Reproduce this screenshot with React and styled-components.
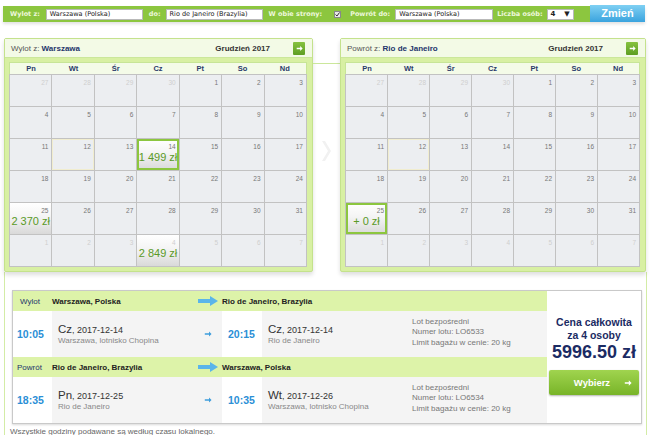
import React from 'react';
import styled, { createGlobalStyle } from 'styled-components';

const GlobalStyle = createGlobalStyle`
  html, body { margin: 0; padding: 0; background: #fff; }
  body {
    font-family: "Liberation Sans", Arial, sans-serif;
    width: 650px;
    height: 435px;
    overflow: hidden;
  }
`;

const Page = styled.div`
  padding-top: 6px;
`;

/* ---------- search bar ---------- */

const SearchBar = styled.div`
  display: flex;
  align-items: center;
  height: 16px;
  margin: 0 5px 0 3px;
  padding-left: 7px;
  background: #8cc63f;
  box-shadow: 0 2px 3px rgba(0, 0, 0, 0.12);
  font-family: "DejaVu Sans", Verdana, sans-serif;
  font-size: 6.5px;
  color: #eef8dc;
`;

const BarLabel = styled.span`
  margin-left: ${p => p.$ml || 0}px;
  font-weight: bold;
  white-space: nowrap;
`;

const BarInput = styled.div`
  box-sizing: border-box;
  width: ${p => p.$w}px;
  height: 11px;
  margin-left: ${p => p.$ml || 5}px;
  padding: 0 3px;
  background: #fff;
  border: 1px solid #b9b9b9;
  color: #222;
  font-size: 6.5px;
  line-height: 9px;
  white-space: nowrap;
`;

const Check = styled.span`
  box-sizing: border-box;
  width: 7px;
  height: 7px;
  margin-left: 12px;
  background: #e9e9e9;
  border: 1px solid #888;
  display: flex;
  align-items: center;
  justify-content: center;
`;

const SelectBox = styled(BarInput)`
  display: flex;
  justify-content: space-between;
  font-size: 7px;
  font-weight: bold;
`;

const ChangeButton = styled.div`
  margin-left: auto;
  width: 55px;
  height: 17px;
  margin-top: -1px;
  background: linear-gradient(#7fd0f3, #3aa3de);
  color: #fff;
  font-family: "Liberation Sans", Arial, sans-serif;
  font-weight: bold;
  font-size: 11px;
  line-height: 17px;
  text-align: center;
`;

/* ---------- calendars ---------- */

const CalendarRow = styled.div`
  display: flex;
  margin: 16px 0 0 4px;
`;

const Frame = styled.div`
  box-sizing: border-box;
  width: ${p => p.$w}px;
  background: #d8f0a3;
  border: 1px solid #c4e28c;
  border-radius: 2px;
  box-shadow: 0 3px 4px rgba(0, 0, 0, 0.13);
`;

const FrameHeader = styled.div`
  display: flex;
  align-items: center;
  height: 18px;
  padding: 0 7px 0 6px;
  background: #f3fae6;
  border-bottom: 1px solid #cbe79b;
  font-size: 8px;
  color: #555;
`;

const Place = styled.b`
  color: #24356b;
`;

const Month = styled.b`
  margin-left: auto;
  margin-right: 23px;
  color: #333;
`;

const NextBtn = styled.span`
  width: 12px;
  height: 13px;
  background: linear-gradient(#86c23f, #5e9e22);
  border-radius: 1px;
  display: flex;
  align-items: center;
  justify-content: center;
`;

const FrameBody = styled.div`
  padding: 4px 5px 4px 4px;
`;

const DayNames = styled.div`
  display: grid;
  grid-template-columns: repeat(7, 1fr);
  height: 11px;
  background: #f4fbe8;
  border: 1px solid #c7e597;
  border-bottom: none;
  font-size: 7.5px;
  font-weight: bold;
  color: #2a3a6a;
  line-height: 11px;
  text-align: center;
`;

const Grid = styled.div`
  display: grid;
  grid-template-columns: repeat(7, 1fr);
  grid-auto-rows: 31px;
  gap: 1px;
  background: #c2c2c2;
  border: 1px solid #c2c2c2;
`;

const Cell = styled.div`
  position: relative;
  display: flex;
  flex-direction: column;
  align-items: center;
  background: ${p => (p.$price ? 'linear-gradient(#ffffff 0%, #f4f4f4 45%, #d9d9d9 100%)' : '#eceef1')};
  box-shadow: ${p =>
    p.$selected ? 'inset 0 0 0 2px #8cc63f' : p.$today ? 'inset 0 0 0 1px #f1edcf' : 'none'};
`;

const DayNum = styled.span`
  align-self: flex-end;
  padding: 4px 3px 0 0;
  font-size: 6.5px;
  color: ${p => (p.$muted ? '#cfcfcf' : '#777')};
`;

const Price = styled.span`
  margin-top: 1px;
  font-size: 11px;
  color: #5a9a27;
  white-space: nowrap;
`;

const Gap = styled.div`
  width: 27px;
  display: flex;
  flex-direction: column;
  align-items: center;
`;

const Connector = styled.div`
  align-self: stretch;
  height: 1px;
  margin-top: 25px;
  background: #cbe79b;
`;

const Chevron = styled.svg`
  margin-top: 77px;
`;

/* ---------- results ---------- */

const Results = styled.div`
  margin: 0 3px 0 4px;
  padding: 18px 4px 0 7px;
  border-left: 1px solid #d3eca6;
  border-right: 1px solid #d3eca6;
`;

const Box = styled.div`
  display: flex;
  border: 1px solid #c9c9c9;
  box-shadow: 0 1px 2px rgba(0, 0, 0, 0.15);
`;

const Table = styled.div`
  width: 534px;
`;

const HeadRow = styled.div`
  display: grid;
  grid-template-columns: 39px 146px 24px 1fr;
  align-items: center;
  height: 20px;
  background: #ddf3a9;
  font-size: 8px;
  font-weight: bold;
  color: #222;
`;

const Dir = styled.span`
  padding-left: ${p => p.$pl}px;
  font-weight: normal;
  color: #24356b;
`;

const FlightRow = styled.div`
  display: grid;
  grid-template-columns: 39px 170px 40px 1fr;
  height: 46px;
`;

const Time = styled.div`
  display: flex;
  align-items: center;
  padding-left: ${p => p.$pl}px;
  background: #fff;
  font-size: 10.5px;
  font-weight: bold;
  color: #2b8fd6;
`;

const Info = styled.div`
  display: flex;
  align-items: center;
  padding-left: 6px;
  background: #f4f4f4;
`;

const Stop = styled.div`
  width: ${p => p.$w || 'auto'};
  display: flex;
  flex-direction: column;
`;

const DateLine = styled.span`
  font-size: 9px;
  color: #333;
  white-space: nowrap;
  b {
    font-weight: normal;
    font-size: 11.5px;
  }
`;

const Sub = styled.span`
  margin-top: 1px;
  font-size: 8px;
  color: #888;
  white-space: nowrap;
`;

const SmallArrow = styled.svg`
  margin-left: auto;
  margin-right: 10px;
`;

const Details = styled.div`
  display: flex;
  flex-direction: column;
  margin-top: -3px;
  font-size: 8px;
  line-height: 10.5px;
  color: #777;
  white-space: nowrap;
`;

const PricePanel = styled.div`
  flex: 1;
  display: flex;
  flex-direction: column;
  align-items: center;
  padding-top: 25px;
  background: #fff;
  color: #1b2b63;
  text-align: center;
`;

const TotalLabel = styled.div`
  font-size: 10.5px;
  font-weight: bold;
  line-height: 13px;
`;

const Total = styled.div`
  font-size: 18px;
  font-weight: bold;
  line-height: 20px;
`;

const ChooseButton = styled.div`
  box-sizing: border-box;
  align-self: stretch;
  display: flex;
  align-items: center;
  justify-content: center;
  gap: 14px;
  height: 25px;
  margin: 8px 2px 0 2px;
  padding-left: 18px;
  background: linear-gradient(#a0d44f, #78b428);
  border-radius: 2px;
  box-shadow: 0 1px 2px rgba(0, 0, 0, 0.3);
  color: #fff;
  font-size: 9.5px;
  font-weight: bold;
`;

const Note = styled.div`
  margin: 3px 0 0 -2px;
  font-size: 8px;
  color: #666;
`;

/* ---------- data ---------- */

const buildDays = () => {
  const days = [];
  [27, 28, 29, 30].forEach(d => days.push({ d, muted: true, key: `p${d}` }));
  for (let d = 1; d <= 31; d++) days.push({ d, key: `d${d}` });
  for (let d = 1; d <= 7; d++) days.push({ d, muted: true, key: `n${d}` });
  return days;
};

const DAYS = buildDays();
const DAY_NAMES = ['Pn', 'Wt', 'Śr', 'Cz', 'Pt', 'So', 'Nd'];

const Arrow = ({ color = '#fff', w = 7, h = 7 }) => (
  <svg width={w} height={h} viewBox="0 0 10 10">
    <path d="M1 4h5V1.5L9.5 5 6 8.5V6H1z" fill={color} />
  </svg>
);

const BigArrow = () => (
  <svg width="20" height="10" viewBox="0 0 20 10">
    <path d="M0 3h12V0l8 5-8 5V7H0z" fill="#5ab5ea" />
  </svg>
);

const Calendar = ({ width, title, place, prices }) => (
  <Frame $w={width}>
    <FrameHeader>
      <span>
        {title} <Place>{place}</Place>
      </span>
      <Month>Grudzień 2017</Month>
      <NextBtn>
        <Arrow />
      </NextBtn>
    </FrameHeader>
    <FrameBody>
      <DayNames>
        {DAY_NAMES.map(n => (
          <span key={n}>{n}</span>
        ))}
      </DayNames>
      <Grid>
        {DAYS.map(day => {
          const info = prices[day.key];
          return (
            <Cell
              key={day.key}
              $price={!!info}
              $selected={info && info.selected}
              $today={day.key === 'd12'}
            >
              <DayNum $muted={day.muted}>{day.d}</DayNum>
              {info && <Price>{info.price}</Price>}
            </Cell>
          );
        })}
      </Grid>
    </FrameBody>
  </Frame>
);

const Flight = ({ dep, depDay, depDate, depPlace, arr, arrDay, arrDate, arrPlace, number }) => (
  <FlightRow>
    <Time $pl={4}>{dep}</Time>
    <Info>
      <Stop>
        <DateLine>
          <b>{depDay}</b>, {depDate}
        </DateLine>
        <Sub>{depPlace}</Sub>
      </Stop>
      <SmallArrow width="8" height="8" viewBox="0 0 10 10">
        <path d="M1 4.2h5.3V1.8L9.4 5 6.3 8.2V5.8H1z" fill="#3d9ddc" />
      </SmallArrow>
    </Info>
    <Time $pl={6}>{arr}</Time>
    <Info>
      <Stop $w="144px">
        <DateLine>
          <b>{arrDay}</b>, {arrDate}
        </DateLine>
        <Sub>{arrPlace}</Sub>
      </Stop>
      <Details>
        <span>Lot bezpośredni</span>
        <span>Numer lotu: {number}</span>
        <span>Limit bagażu w cenie: 20 kg</span>
      </Details>
    </Info>
  </FlightRow>
);

export default function App() {
  return (
    <Page>
      <GlobalStyle />
      <SearchBar>
        <BarLabel>Wylot z:</BarLabel>
        <BarInput $w={97} $ml={6}>Warszawa (Polska)</BarInput>
        <BarLabel $ml={6}>do:</BarLabel>
        <BarInput $w={97} $ml={5}>Rio de Janeiro (Brazylia)</BarInput>
        <BarLabel $ml={6}>W obie strony:</BarLabel>
        <Check>
          <svg width="5" height="5" viewBox="0 0 10 10">
            <path d="M1 5l3 3 5-7" stroke="#333" strokeWidth="2" fill="none" />
          </svg>
        </Check>
        <BarLabel $ml={9}>Powrót do:</BarLabel>
        <BarInput $w={98} $ml={5}>Warszawa (Polska)</BarInput>
        <BarLabel $ml={4}>Liczba osób:</BarLabel>
        <SelectBox $w={27} $ml={4}>
          <span>4</span>
          <span>▼</span>
        </SelectBox>
        <ChangeButton>Zmień</ChangeButton>
      </SearchBar>

      <CalendarRow>
        <Calendar
          width={309}
          title="Wylot z:"
          place="Warszawa"
          prices={{
            d14: { price: '1 499 zł', selected: true },
            d25: { price: '2 370 zł' },
            n4: { price: '2 849 zł' },
          }}
        />
        <Gap>
          <Connector />
          <Chevron width="9" height="20" viewBox="0 0 9 20">
            <path d="M0 0h3l6 10-6 10H0l6-10z" fill="#f1f1f1" />
          </Chevron>
        </Gap>
        <Calendar
          width={306}
          title="Powrót z:"
          place="Rio de Janeiro"
          prices={{ d25: { price: '+ 0 zł', selected: true } }}
        />
      </CalendarRow>

      <Results>
        <Box>
          <Table>
            <HeadRow>
              <Dir $pl={7}>Wylot</Dir>
              <span>Warszawa, Polska</span>
              <BigArrow />
              <span>Rio de Janeiro, Brazylia</span>
            </HeadRow>
            <Flight
              dep="10:05"
              depDay="Cz"
              depDate="2017-12-14"
              depPlace="Warszawa, lotnisko Chopina"
              arr="20:15"
              arrDay="Cz"
              arrDate="2017-12-14"
              arrPlace="Rio de Janeiro"
              number="LO6533"
            />
            <HeadRow>
              <Dir $pl={4}>Powrót</Dir>
              <span>Rio de Janeiro, Brazylia</span>
              <BigArrow />
              <span>Warszawa, Polska</span>
            </HeadRow>
            <Flight
              dep="18:35"
              depDay="Pn"
              depDate="2017-12-25"
              depPlace="Rio de Janeiro"
              arr="10:35"
              arrDay="Wt"
              arrDate="2017-12-26"
              arrPlace="Warszawa, lotnisko Chopina"
              number="LO6534"
            />
          </Table>
          <PricePanel>
            <TotalLabel>Cena całkowita</TotalLabel>
            <TotalLabel>za 4 osoby</TotalLabel>
            <Total>5996.50 zł</Total>
            <ChooseButton>
              <span>Wybierz</span>
              <Arrow w={8} h={8} />
            </ChooseButton>
          </PricePanel>
        </Box>
        <Note>Wszystkie godziny podawane są według czasu lokalnego.</Note>
      </Results>
    </Page>
  );
}
